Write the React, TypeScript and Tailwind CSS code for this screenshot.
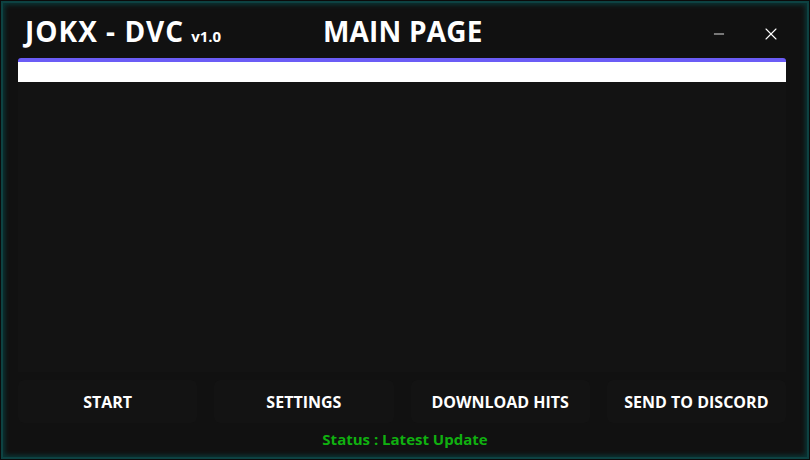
import { X, Minus } from "lucide-react";

const buttons = ["START", "SETTINGS", "DOWNLOAD HITS", "SEND TO DISCORD"];

export default function App() {
  return (
    <div className="w-[810px] h-[460px] bg-[#0b0b0b] p-[1px]">
      <div
        className="w-full h-full flex flex-col bg-[#111111] border-[2px] border-[#0d4242] shadow-[inset_0_0_4px_2px_#0a3434]"
        style={{ fontFamily: '"Open Sans", "Noto Sans", sans-serif' }}
      >
        {/* title bar */}
        <div className="relative h-[55px] flex items-start text-white">
          <div className="pl-[22px] pt-[9px] flex items-baseline">
            <span className="text-[28px] font-bold leading-[38px] tracking-[1px]">JOKX - DVC</span>
            <span className="ml-[7px] text-[15px] font-bold">v1.0</span>
          </div>
          <div className="absolute left-[320px] top-[9px] text-[28px] font-bold leading-[38px] tracking-[0.2px]">
            MAIN PAGE
          </div>
          <div className="ml-auto flex items-center gap-[34px] pt-[21px] pr-[26px]">
            <Minus className="size-[16px]" strokeWidth={1.3} />
            <X className="size-[20px]" strokeWidth={1.3} />
          </div>
        </div>

        {/* main panel */}
        <div className="ml-[15px] mr-[21px] h-[314px] flex flex-col bg-[#131313] rounded-t-[3px] overflow-hidden">
          <div className="h-[4px] bg-[#6b5cf6]" />
          <div className="h-[20px] bg-white" />
          <div className="flex-1" />
        </div>

        {/* action buttons */}
        <div className="ml-[15px] mr-[21px] mt-[8px] grid grid-cols-4 gap-[17px]">
          {buttons.map((b) => (
            <button
              key={b}
              className="h-[43px] rounded-[6px] bg-[#131313] text-white text-[16px] font-bold"
            >
              {b}
            </button>
          ))}
        </div>

        <div className="mt-[5px] text-center text-[15px] font-bold text-[#10b010]">Status : Latest Update</div>
      </div>
    </div>
  );
}
